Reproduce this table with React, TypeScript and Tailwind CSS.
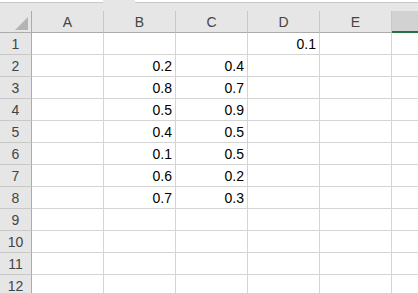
import React from "react";

const cols = ["A", "B", "C", "D", "E"];
const data: Record<number, Record<string, string>> = {
  1: { D: "0.1" },
  2: { B: "0.2", C: "0.4" },
  3: { B: "0.8", C: "0.7" },
  4: { B: "0.5", C: "0.9" },
  5: { B: "0.4", C: "0.5" },
  6: { B: "0.1", C: "0.5" },
  7: { B: "0.6", C: "0.2" },
  8: { B: "0.7", C: "0.3" },
};
const rows = [1, 2, 3, 4, 5, 6, 7, 8, 9, 10, 11, 12];

export default function App() {
  return (
    <div
      className="w-[418px] h-[293px] overflow-hidden bg-white text-[14px]"
      style={{ fontFamily: '"Liberation Sans", Arial, sans-serif' }}
    >
      {/* formula bar remnant */}
      <div className="flex h-[3px] bg-[#e6e6e6]">
        <div className="w-[103px] h-[2px] bg-white border-b border-[#c8c8c8] box-content" />
        <div className="w-[32px]" />
        <div className="flex-1 h-[2px] bg-white border-b border-[#c8c8c8] box-content" />
      </div>
      <div className="h-[8px] bg-[#e6e6e6]" />
      {/* header row */}
      <div className="flex h-[22px] bg-[#e6e6e6]">
        <div className="relative w-[32px] shrink-0 border-r border-b border-[#ababab]">
          <svg className="absolute left-[15px] top-[6px]" width="13" height="13" viewBox="0 0 13 13">
            <polygon points="13,0 13,13 0,13" fill="#b4b4b4" />
          </svg>
        </div>
        {cols.map((c) => (
          <div
            key={c}
            className="w-[72px] shrink-0 flex items-center justify-center border-r border-b border-r-[#c8c8c8] border-b-[#ababab] text-[#444] pt-[2px]"
          >
            {c}
          </div>
        ))}
        <div className="flex-1 bg-[#d2d2d2] border-b-2 border-[#217346]" />
      </div>
      {rows.map((r) => (
        <div key={r} className="flex h-[22px]">
          <div className="w-[32px] shrink-0 flex items-center justify-center bg-[#e6e6e6] border-r border-b border-r-[#ababab] border-b-[#c8c8c8] text-[#444] pt-[2px]">
            {r}
          </div>
          {cols.map((c) => (
            <div
              key={c}
              className="w-[72px] shrink-0 flex items-end justify-end border-r border-b border-[#d4d4d4] pr-[3px] pb-[2px] leading-[16px] text-black"
            >
              {data[r]?.[c] ?? ""}
            </div>
          ))}
          <div className="flex-1 border-b border-[#d4d4d4]" />
        </div>
      ))}
    </div>
  );
}
